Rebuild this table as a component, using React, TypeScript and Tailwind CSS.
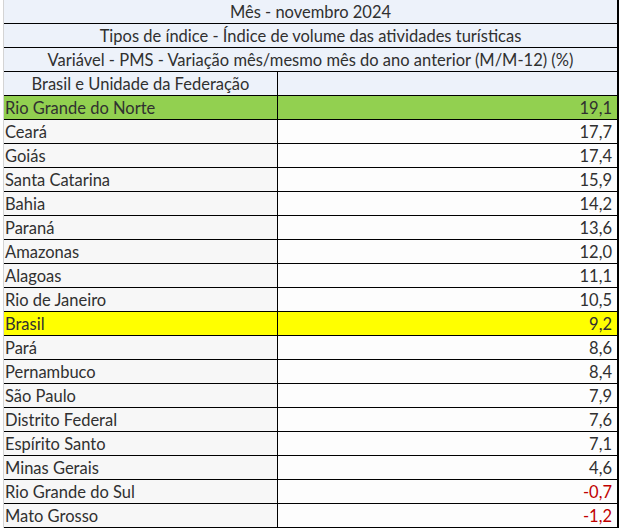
const rows: { name: string; value: string; bg?: string }[] = [
  { name: "Rio Grande do Norte", value: "19,1", bg: "bg-[#92d050]" },
  { name: "Ceará", value: "17,7" },
  { name: "Goiás", value: "17,4" },
  { name: "Santa Catarina", value: "15,9" },
  { name: "Bahia", value: "14,2" },
  { name: "Paraná", value: "13,6" },
  { name: "Amazonas", value: "12,0" },
  { name: "Alagoas", value: "11,1" },
  { name: "Rio de Janeiro", value: "10,5" },
  { name: "Brasil", value: "9,2", bg: "bg-[#ffff00]" },
  { name: "Pará", value: "8,6" },
  { name: "Pernambuco", value: "8,4" },
  { name: "São Paulo", value: "7,9" },
  { name: "Distrito Federal", value: "7,6" },
  { name: "Espírito Santo", value: "7,1" },
  { name: "Minas Gerais", value: "4,6" },
  { name: "Rio Grande do Sul", value: "-0,7" },
  { name: "Mato Grosso", value: "-1,2" },
];

const headers = [
  "Mês - novembro 2024",
  "Tipos de índice - Índice de volume das atividades turísticas",
  "Variável - PMS - Variação mês/mesmo mês do ano anterior (M/M-12) (%)",
];

export default function App() {
  return (
    <div
      className="w-[619px] h-[529px] bg-white text-[#303030] text-[16.5px] leading-none"
      style={{ fontFamily: "Lato, 'Open Sans', sans-serif" }}
    >
      <div className="ml-[3px] w-[616px] border-l border-l-[#d4d4d4] border-r-2 border-r-black">
        {headers.map((h) => (
          <div
            key={h}
            className="h-[24px] border-b border-black bg-[#edf2fa] flex items-center justify-center pt-[2px]"
          >
            {h}
          </div>
        ))}
        <div className="h-[24px] border-b border-black bg-[#edf2fa] flex">
          <div className="w-[274px] border-r border-black flex items-center justify-center pt-[2px]">
            Brasil e Unidade da Federação
          </div>
          <div className="flex-1" />
        </div>
        {rows.map((r) => {
          const neg = r.value.startsWith("-");
          return (
            <div key={r.name} className={`h-[24px] border-b border-black flex ${r.bg ?? ""}`}>
              <div
                className={`w-[274px] border-r border-black flex items-center pl-[1px] pt-[2px] ${r.bg ? "" : "bg-[#f7f7f7]"}`}
              >
                {r.name}
              </div>
              <div
                className={`flex-1 flex items-center justify-end pr-[5px] pt-[2px] ${r.bg ? "" : "bg-[#fdfdfd]"} ${neg ? "text-[#c00000]" : ""}`}
              >
                {r.value}
              </div>
            </div>
          );
        })}
      </div>
    </div>
  );
}
